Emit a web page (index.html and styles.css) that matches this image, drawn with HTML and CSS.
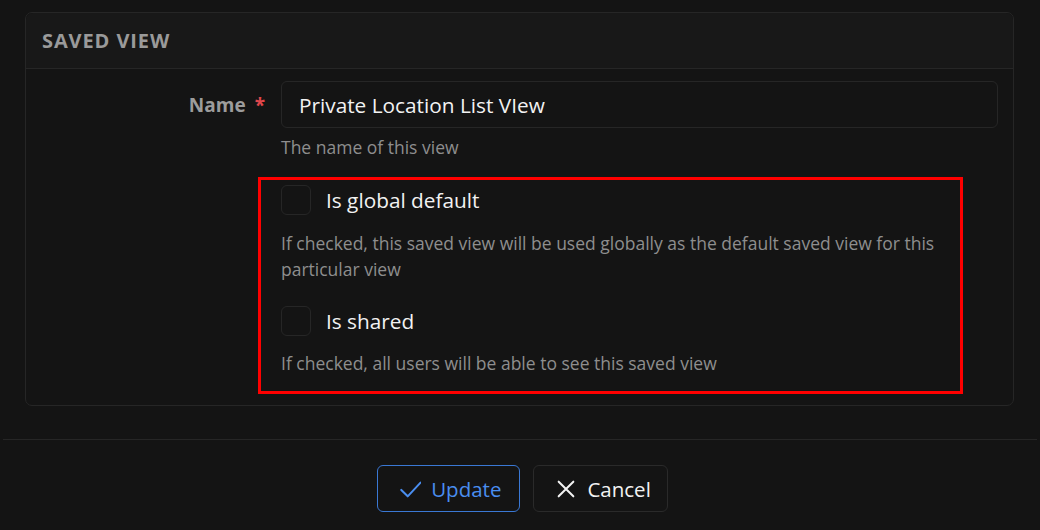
FILE: index.html
```html
<!DOCTYPE html>
<html lang="en">
<head>
<meta charset="utf-8">
<title>Saved View</title>
<link rel="stylesheet" href="styles.css">
</head>
<body>
<div class="page">
  <section class="card">
    <header class="card-header">Saved View</header>
    <div class="card-body">
      <div class="form-row">
        <label class="field-label" for="name">Name <span class="req">*</span></label>
        <div class="field">
          <div class="input" id="name">Private Location List VIew</div>
          <div class="help">The name of this view</div>
        </div>
      </div>
      <div class="form-row">
        <div></div>
        <div class="group">
          <div class="check-row">
            <span class="checkbox"></span>
            <span class="check-label">Is global default</span>
          </div>
          <div class="help help-check">If checked, this saved view will be used globally as the default saved view for this particular view</div>
          <div class="check-row check-row-2">
            <span class="checkbox"></span>
            <span class="check-label">Is shared</span>
          </div>
          <div class="help help-check">If checked, all users will be able to see this saved view</div>
        </div>
      </div>
    </div>
  </section>
  <div class="divider"></div>
  <div class="actions">
    <button class="btn btn-primary" type="button">
      <svg class="icon" viewBox="0 0 24 24" width="22" height="22"><path d="M2.5 13l7 7L23.5 5" fill="none" stroke="currentColor" stroke-width="2.2" stroke-linecap="round" stroke-linejoin="round"/></svg>
      <span>Update</span>
    </button>
    <button class="btn btn-default" type="button">
      <svg class="icon" viewBox="0 0 24 24" width="22" height="22"><path d="M4 4L20 20M20 4L4 20" fill="none" stroke="currentColor" stroke-width="2.2" stroke-linecap="round"/></svg>
      <span>Cancel</span>
    </button>
  </div>
</div>
</body>
</html>
```
FILE: styles.css
```css
* { box-sizing: border-box; }
html, body {
  margin: 0;
  background: #141414;
}
body {
  font-family: "Open Sans", "Noto Sans", sans-serif;
  color: #f0f0f0;
}
.page {
  padding-top: 12px;
}
.card {
  margin: 0 26px 0 25px;
  border: 1px solid #262626;
  border-radius: 7px;
  background: #141414;
}
.card-header {
  height: 56px;
  display: flex;
  align-items: center;
  padding-left: 16px;
  background: #181818;
  border-bottom: 1px solid #262626;
  border-radius: 7px 7px 0 0;
  font-size: 20px;
  font-weight: 700;
  letter-spacing: 0.9px;
  text-transform: uppercase;
  color: #9a9a9a;
}
.card-body {
  padding: 12px 15px 11px 0;
}
.form-row {
  display: grid;
  grid-template-columns: 239px 1fr;
  column-gap: 16px;
}
.field-label {
  height: 47px;
  display: flex;
  align-items: center;
  justify-content: flex-end;
  font-size: 19px;
  font-weight: 700;
  color: #9c9c9c;
}
.req {
  color: #e0474c;
  margin-left: 9px;
}
.input {
  height: 47px;
  display: flex;
  align-items: center;
  padding-left: 17px;
  border: 1px solid #262626;
  border-radius: 6px;
  font-size: 20.8px;
  color: #f2f2f2;
}
.help {
  font-size: 17.5px;
  line-height: 24px;
  color: #8e8e8e;
  margin-top: 7px;
}
.group {
  margin: 18px 35px 0 -23px;
  border: 3px solid #ff0000;
  padding: 5px 8px 15px 20px;
}
.check-row {
  display: flex;
  align-items: center;
  gap: 15px;
  height: 30px;
}
.check-row-2 {
  margin-top: 24px;
}
.checkbox {
  width: 30px;
  height: 30px;
  border: 1px solid #262626;
  border-radius: 6px;
  flex: none;
}
.check-label {
  font-size: 20.8px;
  color: #f2f2f2;
}
.help-check {
  line-height: 26px;
  margin-top: 15px;
}
.check-row-2 + .help-check {
  margin-top: 14px;
}
.divider {
  margin: 33px 3px 0 3px;
  height: 1px;
  background: #262626;
}
.actions {
  display: flex;
  justify-content: center;
  gap: 13px;
  padding-top: 25px;
  padding-left: 5px;
}
.btn {
  height: 47px;
  display: inline-flex;
  align-items: center;
  gap: 10px;
  padding: 0 18px 0 21px;
  border-radius: 6px;
  background: #141414;
  font-family: inherit;
  font-size: 20.5px;
  cursor: pointer;
}
.btn-primary {
  border: 1px solid #3a78d4;
  color: #4a8ef0;
}
.btn-default {
  border: 1px solid #2a2a2a;
  color: #f2f2f2;
  padding-right: 16px;
}
.icon {
  display: block;
  flex: none;
}
```
